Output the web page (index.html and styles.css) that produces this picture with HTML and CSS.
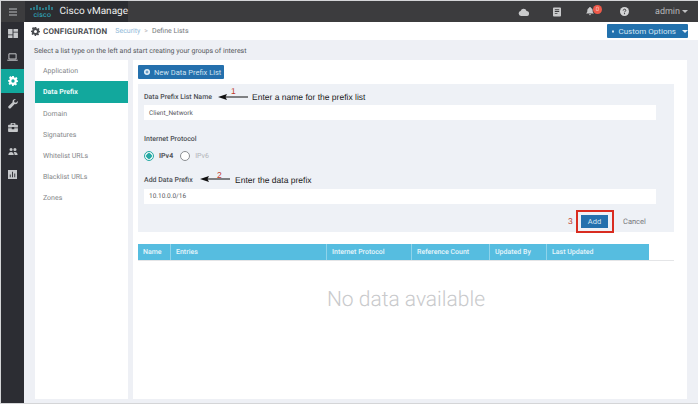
FILE: index.html
```html
<!DOCTYPE html>
<html lang="en">
<head>
<meta charset="utf-8">
<title>Cisco vManage</title>
<link rel="stylesheet" href="styles.css">
</head>
<body>
<div class="window">
  <header class="topbar">
    <div class="burger"><svg width="10" height="8" viewBox="0 0 10 8"><path d="M1 1h8M1 4h8M1 7h8" stroke="#b9bbbe" stroke-width="1"/></svg></div>
    <div class="brand">
      <div class="logo">
        <svg width="24" height="8" viewBox="0 0 24 8"><path d="M1 4v2M4 3v3M7 1v5M10 3v3M13 4v2M16 3v3M19 1v5M22 3v3" stroke="#2fb5c9" stroke-width="1.1" fill="none"/></svg>
        <span class="logo-text">cisco</span>
      </div>
      <span class="product">Cisco vManage</span>
    </div>
    <div class="top-tools">
      <svg class="tool" width="11" height="8" viewBox="0 0 11 8"><path d="M3 8a2.6 2.6 0 0 1-.4-5.1A3.2 3.2 0 0 1 8.6 3 2.5 2.5 0 0 1 8.500 8z" fill="#c9cacb"/></svg>
      <svg class="tool tool-doc" width="8" height="10" viewBox="0 0 9 10"><path fill="#c9cacb" fill-rule="evenodd" d="M1 0h7a1 1 0 0 1 1 1v8a1 1 0 0 1-1 1H1a1 1 0 0 1-1-1V1a1 1 0 0 1 1-1zm1 2v1h5V2zm0 2v1h5V4zm0 2v1h3V6z"/></svg>
      <div class="bell">
        <svg width="8" height="9" viewBox="0 0 8 9"><path d="M4 0a1 1 0 0 1 1 1c1.500.4 1.700 1.700 1.700 3 0 1 .4 1.700 1.300 2.500H0C.9 5.700 1.300 5 1.300 4c0-1.300.2-2.600 1.700-3a1 1 0 0 1 1-1zM3 7.300h2a1 1 0 0 1-2 0z" fill="#c9cacb"/></svg>
        <span class="badge">0</span>
      </div>
      <svg class="tool tool-help" width="9" height="9" viewBox="0 0 10 10"><circle cx="5" cy="5" r="5" fill="#d2d3d4"/><path d="M3.500 3.900C3.600 2 6.500 2 6.500 3.700 6.500 4.800 5 4.800 5 6" stroke="#3a3a3c" stroke-width="1.100" fill="none"/><rect x="4.400" y="6.800" width="1.200" height="1.200" fill="#3a3a3c"/></svg>
      <span class="admin">admin</span><span class="caret caret-admin"></span>
    </div>
  </header>
  <div class="body-row">
    <nav class="rail">
      <div class="rail-item"><svg width="10" height="9" viewBox="0 0 11 10"><path fill="#c5c7ca" d="M0 0h5v6H0zM6 0h5v3H6zM6 4h5v6H6zM0 7h5v3H0z"/></svg></div>
      <div class="rail-item"><svg width="11" height="8" viewBox="0 0 13 10"><path fill="none" stroke="#c5c7ca" stroke-width="1.200" d="M2 1h9v6.500H2z"/><path stroke="#c5c7ca" stroke-width="1.300" d="M0 9h13"/></svg></div>
      <div class="rail-item rail-active"><svg width="10" height="10" viewBox="0 0 24 24"><path fill="#fff" fill-rule="evenodd" d="M10 0h4l.7 3.400 2.300 1 3-1.900 2.800 2.800-1.900 3 1 2.300L24 10v4l-3.400.7-1 2.300 1.900 3-2.800 2.800-3-1.900-2.300 1L14 24h-4l-.7-3.400-2.300-1-3 1.900-2.800-2.800 1.900-3-1-2.300L0 14v-4l3.400-.7 1-2.300-1.900-3L5.300.2l3 1.900 1-.6zM12 8a4 4 0 1 0 0 8 4 4 0 0 0 0-8z"/></svg></div>
      <div class="rail-item"><svg width="10" height="10" viewBox="0 0 11 11"><path fill="#c5c7ca" d="M10.700 2.300 8.800 4.200 7 3.700 6.600 2 8.600.2C6.800-.4 4.700 1 5 3.500L.5 8c-1 1.500.9 3.300 2.400 2.200l4.500-4.600c2.300.5 3.900-1.300 3.300-3.300z"/></svg></div>
      <div class="rail-item"><svg width="10" height="9" viewBox="0 0 12 11"><path fill="#c5c7ca" fill-rule="evenodd" d="M4 0h4a1 1 0 0 1 1 1v1h2a1 1 0 0 1 1 1v2.500H7.500V5h-3v.5H0V3a1 1 0 0 1 1-1h2V1a1 1 0 0 1 1-1zm.5 1v1h3V1zM0 6.500h4.500V7.500h3v-1H12V10a1 1 0 0 1-1 1H1a1 1 0 0 1-1-1z"/></svg></div>
      <div class="rail-item"><svg width="10" height="7" viewBox="0 0 12 9"><path fill="#c5c7ca" d="M3.500 0a2 2 0 1 1 0 4 2 2 0 0 1 0-4zM8.500 0a2 2 0 1 1 0 4 2 2 0 0 1 0-4zM0 9c0-5 7-5 7 0zM8 9c0-1.500-.3-2.600-1.200-3.500C9 4.300 12 5.500 12 9z"/></svg></div>
      <div class="rail-item"><svg width="9" height="9" viewBox="0 0 10 10"><path fill="#c5c7ca" fill-rule="evenodd" d="M0 0h10v10H0zm2 5v3h1V5zm2.500-3v6h1V2zM7 4v4h1V4z"/></svg></div>
    </nav>
    <main class="page">
      <div class="subheader">
        <div class="sub-left">
          <svg width="9" height="9" viewBox="0 0 24 24"><path fill="#4a4c50" fill-rule="evenodd" d="M10 0h4l.7 3.400 2.300 1 3-1.900 2.800 2.800-1.900 3 1 2.300L24 10v4l-3.400.7-1 2.300 1.900 3-2.800 2.800-3-1.900-2.300 1L14 24h-4l-.7-3.400-2.300-1-3 1.900-2.800-2.800 1.900-3-1-2.300L0 14v-4l3.400-.7 1-2.300-1.900-3L5.300.2l3 1.900 1-.6zM12 8a4 4 0 1 0 0 8 4 4 0 0 0 0-8z"/></svg>
          <span class="sub-title">CONFIGURATION</span>
          <span class="crumb-link">Security</span>
          <span class="crumb-sep">&gt;</span>
          <span class="crumb">Define Lists</span>
        </div>
        <button class="custom-btn"><svg width="6" height="5" viewBox="0 0 6 5"><path fill="#cfe3f2" d="M0 0h6v5H0z"/></svg>Custom Options<span class="caret caret-custom"></span></button>
      </div>
      <div class="content">
        <p class="hint">Select a list type on the left and start creating your groups of interest</p>
        <div class="columns">
          <ul class="list-types">
            <li>Application</li>
            <li class="active">Data Prefix</li>
            <li>Domain</li>
            <li>Signatures</li>
            <li>Whitelist URLs</li>
            <li>Blacklist URLs</li>
            <li>Zones</li>
          </ul>
          <section class="detail">
            <button class="new-btn"><svg width="6" height="6" viewBox="0 0 6 6"><circle cx="3" cy="3" r="3" fill="#e6f0f8"/><path d="M3 1.500v3M1.500 3h3" stroke="#2470ad" stroke-width=".8"/></svg>New Data Prefix List</button>
            <div class="form">
              <label class="label label-name">Data Prefix List Name</label>
              <div class="input input-name">Client_Network</div>
              <label class="label label-proto">Internet Protocol</label>
              <div class="radios">
                <span class="radio radio-on"></span><span class="radio-text on">IPv4</span>
                <span class="radio"></span><span class="radio-text">IPv6</span>
              </div>
              <label class="label label-add">Add Data Prefix</label>
              <div class="input">10.10.0.0/16</div>
              <div class="actions">
                <button class="add-btn">Add</button>
                <span class="cancel">Cancel</span>
              </div>
            </div>
            <div class="table">
              <div class="thead">
                <span class="col-name">Name</span>
                <span class="col-entries">Entries</span>
                <span class="col-proto">Internet Protocol</span>
                <span class="col-ref">Reference Count</span>
                <span class="col-by">Updated By</span>
                <span class="col-last">Last Updated</span>
              </div>
              <div class="empty">No data available</div>
            </div>
            <svg class="note arrow-1" width="30" height="6" viewBox="0 0 30 6"><path d="M7 3h23" stroke="#111" stroke-width="1"/><path d="M0 3l9-3-1.500 3L9 6z" fill="#111"/></svg>
            <span class="note num num-1">1</span>
            <span class="note note-text text-1">Enter a name for the prefix list</span>
            <svg class="note arrow-2" width="30" height="6" viewBox="0 0 30 6"><path d="M7 3h23" stroke="#111" stroke-width="1"/><path d="M0 3l9-3-1.500 3L9 6z" fill="#111"/></svg>
            <span class="note num num-2">2</span>
            <span class="note note-text text-2">Enter the data prefix</span>
            <span class="note num num-3">3</span>
            <span class="note add-box"></span>
          </section>
        </div>
      </div>
    </main>
  </div>
</div>
</body>
</html>
```
FILE: styles.css
```css
* { box-sizing: border-box; }
html, body { margin: 0; padding: 0; }
body {
  width: 698px;
  height: 404px;
  overflow: hidden;
  background: #d4d5d7;
  font-family: Roboto, "Liberation Sans", sans-serif;
  color: #55585c;
  text-rendering: geometricPrecision;
}
.window {
  width: 697px;
  height: 402px;
  margin: 1px 0 0 1px;
  display: flex;
  flex-direction: column;
  background: #eef0f5;
}
.topbar {
  height: 21px;
  flex: none;
  display: flex;
  align-items: center;
  background: #3c3c3e;
}
.burger {
  width: 24px;
  display: flex;
  justify-content: center;
}
.brand {
  width: 103px;
  height: 21px;
  display: flex;
  align-items: center;
  background: #2c2d31;
}
.logo {
  width: 29px;
  margin-left: 5px;
  display: flex;
  flex-direction: column;
  align-items: center;
  line-height: 7px;
}
.logo-text {
  font-size: 7px;
  letter-spacing: .2px;
  color: #2fb5c9;
}
.product {
  margin-left: 5px;
  font-size: 10px;
  color: #eceded;
  white-space: nowrap;
}
.top-tools {
  flex: 1;
  display: flex;
  align-items: center;
  padding-left: 390px;
  color: #bfc0c2;
}
.tool-doc { margin-left: 24px; }
.bell {
  margin-left: 25px;
  width: 16px;
  height: 14px;
  display: flex;
  align-items: center;
  position: relative;
}
.badge {
  position: absolute;
  left: 7px;
  top: 0;
  width: 9px;
  height: 9px;
  border-radius: 50%;
  background: #ee5a4a;
  color: #ffc9c1;
  font-size: 6px;
  line-height: 9px;
  text-align: center;
}
.tool-help { margin-left: 18px; }
.admin {
  margin-left: 26px;
  font-size: 9px;
  color: #b5b6b8;
}
.caret {
  display: inline-block;
  width: 0;
  height: 0;
  border-left: 3px solid transparent;
  border-right: 3px solid transparent;
  border-top: 3px solid currentColor;
}
.caret-admin { margin-left: 2px; }
.caret-custom { margin-left: 2px; color: #e6f0f8; }
.body-row {
  flex: 1;
  display: flex;
  min-height: 0;
}
.rail {
  width: 23px;
  flex: none;
  display: flex;
  flex-direction: column;
  background: #2c2d33;
}
.rail-item {
  height: 23.500px;
  display: flex;
  align-items: center;
  justify-content: center;
}
.rail-active { background: #12a89d; }
.page {
  flex: 1;
  display: flex;
  flex-direction: column;
  min-width: 0;
}
.subheader {
  height: 18px;
  flex: none;
  display: flex;
  align-items: center;
  justify-content: space-between;
  padding: 0 10px 0 7px;
  background: #fff;
}
.sub-left {
  display: flex;
  align-items: center;
}
.sub-title {
  margin-left: 3px;
  font-size: 8px;
  font-weight: 700;
  letter-spacing: .15px;
  color: #4d4f53;
}
.crumb-link {
  margin-left: 8px;
  font-size: 7px;
  color: #8db8d8;
}
.crumb-sep {
  margin-left: 4px;
  font-size: 7px;
  color: #a5a7aa;
}
.crumb {
  margin-left: 4px;
  font-size: 7px;
  color: #75787c;
}
.custom-btn {
  width: 81px;
  height: 14px;
  padding: 0 0 0 5px;
  border: 0;
  border-radius: 1px;
  display: flex;
  align-items: center;
  gap: 4px;
  white-space: nowrap;
  background: #2271ad;
  color: #d4e5f2;
  font: 8px Roboto, "Liberation Sans", sans-serif;
}
.content {
  flex: 1;
  min-height: 0;
  display: flex;
  flex-direction: column;
  padding: 0 10px 4px 11px;
}
.hint {
  margin: 6px 0 0 -1px;
  height: 14px;
  font-size: 7px;
  line-height: 10px;
  color: #55585c;
}
.columns {
  flex: 1;
  min-height: 0;
  display: flex;
  gap: 5px;
}
.list-types {
  width: 93px;
  flex: none;
  margin: 0;
  padding: 0;
  list-style: none;
  background: #fff;
}
.list-types li {
  height: 21px;
  padding-left: 8px;
  font-size: 7px;
  line-height: 23px;
  color: #85878a;
}
.list-types .active {
  height: 22px;
  line-height: 23px;
  background: #12a89d;
  color: #eafafa;
  font-weight: 700;
}
.detail {
  width: 554px;
  position: relative;
  padding: 5px 13px 0 5px;
  background: #fff;
}
.new-btn {
  width: 86px;
  height: 14px;
  padding: 0 0 0 6px;
  border: 0;
  border-radius: 1px;
  display: flex;
  align-items: center;
  gap: 4px;
  background: #2470ad;
  color: #cfe2f1;
  font: 7.500px Roboto, "Liberation Sans", sans-serif;
}
.form {
  height: 148px;
  margin-top: 5px;
  padding: 0 18px 0 6px;
  display: flex;
  flex-direction: column;
  background: #eef1f6;
}
.label {
  display: block;
  font-size: 7px;
  font-weight: 500;
  line-height: 10px;
  color: #4f5256;
}
.label-name { margin-top: 8px; }
.label-proto { margin-top: 14px; }
.label-add { margin-top: 12px; }
.input {
  height: 15px;
  margin-top: 4px;
  padding-left: 5px;
  flex: none;
  background: #fff;
  font-size: 6.500px;
  line-height: 15px;
  color: #55585c;
}
.input-name {
  margin-top: 3px;
  line-height: 17px;
}
.radios {
  height: 14px;
  margin-top: 5px;
  display: flex;
  align-items: center;
}
.radio {
  width: 10px;
  height: 10px;
  flex: none;
  border: 1px solid #8b8e92;
  border-radius: 50%;
  background: #fff;
}
.radio-on {
  border-color: #26aaa4;
  background: radial-gradient(circle, #26aaa4 0 2.500px, #eaf6f6 3px);
}
.radio-text {
  margin: 0 7px 0 5px;
  font-size: 7px;
  color: #b0b3b7;
}
.radio-text.on {
  font-weight: 700;
  color: #55585c;
}
.actions {
  margin: 11px 6px 0 0;
  display: flex;
  align-items: center;
  justify-content: flex-end;
}
.add-btn {
  width: 27px;
  height: 13px;
  padding: 0;
  border: 0;
  background: #2470ad;
  color: #d6e6f3;
  font: 7.500px Roboto, "Liberation Sans", sans-serif;
}
.cancel {
  margin-left: 15px;
  width: 27px;
  font-size: 7.500px;
  color: #77797d;
}
.table {
  margin-top: 12px;
}
.thead {
  width: 511px;
  height: 16px;
  display: flex;
  background: #56bde0;
  color: #e6f5fb;
  font-size: 7px;
  font-weight: 500;
  line-height: 16px;
}
.thead span {
  flex: none;
  padding-left: 5px;
  border-right: 1px solid #8fd3ea;
}
.thead .col-last { border-right: 0; }
.col-name { width: 33px; }
.col-entries { width: 156px; }
.col-proto { width: 85px; }
.col-ref { width: 78px; }
.col-by { width: 57px; }
.col-last { flex: 1; }
.empty {
  padding-top: 27px;
  height: 60px;
  border-top: 1px solid #e4e5e7;
  text-align: center;
  font-size: 21px;
  font-weight: 300;
  line-height: 24px;
  color: #c9cacc;
}
.note { position: absolute; }
.note-text {
  font-family: "Liberation Sans", Arial, sans-serif;
  font-size: 8.500px;
  line-height: 10px;
  color: #1c1c1c;
  white-space: nowrap;
}
.num {
  font-family: "Liberation Sans", Arial, sans-serif;
  font-size: 8.500px;
  line-height: 10px;
  color: #c0392b;
}
.arrow-1 { left: 85px; top: 34px; }
.num-1 { left: 98px; top: 26px; }
.text-1 { left: 119px; top: 32px; }
.arrow-2 { left: 67px; top: 116px; }
.num-2 { left: 84px; top: 110px; }
.text-2 { left: 102px; top: 115px; }
.num-3 { left: 435px; top: 156px; }
.add-box {
  left: 443px;
  top: 150px;
  width: 38px;
  height: 23px;
  border: 2px solid #d92c20;
}
```
